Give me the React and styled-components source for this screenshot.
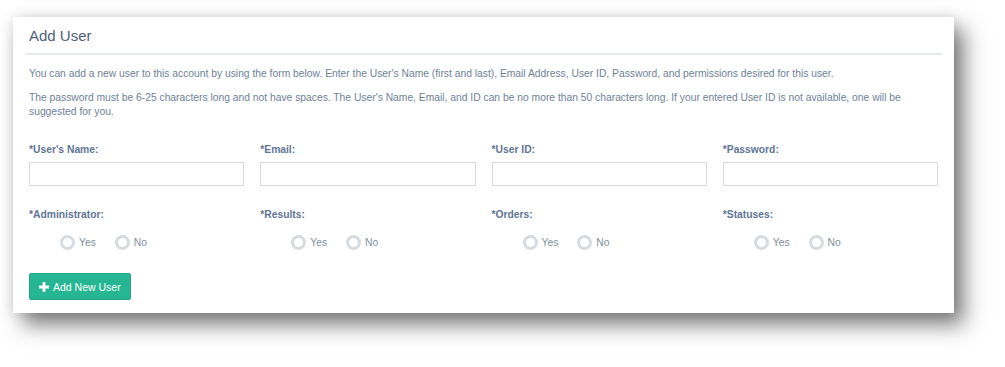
import styled, { createGlobalStyle } from "styled-components";

const GlobalStyle = createGlobalStyle`
  html, body {
    margin: 0;
    padding: 0;
    background: #ffffff;
  }
  body {
    font-family: "Liberation Sans", Arial, sans-serif;
  }
  * {
    box-sizing: border-box;
  }
`;

const textFields = [
  { id: "name", label: "*User's Name:" },
  { id: "email", label: "*Email:" },
  { id: "userid", label: "*User ID:" },
  { id: "password", label: "*Password:", type: "password" },
];

const permissions = [
  { id: "admin", label: "*Administrator:" },
  { id: "results", label: "*Results:" },
  { id: "orders", label: "*Orders:" },
  { id: "statuses", label: "*Statuses:" },
];

export default function App() {
  return (
    <>
      <GlobalStyle />
      <Page>
        <Card>
          <Header>
            <Title>Add User</Title>
          </Header>
          <Body>
            <Intro>
              You can add a new user to this account by using the form below. Enter the
              User's Name (first and last), Email Address, User ID, Password, and
              permissions desired for this user.
            </Intro>
            <Intro $gap>
              The password must be 6-25 characters long and not have spaces. The User's
              Name, Email, and ID can be no more than 50 characters long. If your entered
              User ID is not available, one will be suggested for you.
            </Intro>

            <FieldGrid>
              {textFields.map((f) => (
                <Field key={f.id}>
                  <Label htmlFor={f.id}>{f.label}</Label>
                  <Input id={f.id} type={f.type || "text"} />
                </Field>
              ))}
            </FieldGrid>

            <FieldGrid $second>
              {permissions.map((p) => (
                <Field key={p.id}>
                  <Label as="span">{p.label}</Label>
                  <RadioRow>
                    <RadioOption>
                      <Circle />
                      Yes
                    </RadioOption>
                    <RadioOption>
                      <Circle />
                      No
                    </RadioOption>
                  </RadioRow>
                </Field>
              ))}
            </FieldGrid>

            <AddButton>
              <svg width="10" height="10" viewBox="0 0 10 10">
                <path d="M3.6 0h2.8v3.6H10v2.8H6.4V10H3.6V6.4H0V3.6h3.6z" fill="#fff" />
              </svg>
              Add New User
            </AddButton>
          </Body>
        </Card>
      </Page>
    </>
  );
}

const Page = styled.div`
  width: 1005px;
  height: 367px;
  padding: 17px 0 0 13px;
`;

const Card = styled.section`
  width: 941px;
  height: 296px;
  background: #ffffff;
  box-shadow: 0 0 12px rgba(0, 0, 0, 0.12), 10px 12px 20px rgba(0, 0, 0, 0.5);
`;

const Header = styled.div`
  margin: 0 12px;
  padding: 9px 4px 7px;
  border-bottom: 2px solid #e6e9ef;
`;

const Title = styled.h2`
  margin: 0;
  font-size: 15px;
  line-height: 20px;
  font-weight: normal;
  color: #4e6079;
`;

const Body = styled.div`
  padding: 12px 16px 14px;
`;

const Intro = styled.p`
  margin: ${(p) => (p.$gap ? "10px" : "0")} 0 0;
  font-size: 10.3px;
  line-height: 14px;
  color: #6f8199;
`;

const FieldGrid = styled.div`
  display: grid;
  grid-template-columns: repeat(4, 1fr);
  column-gap: 16px;
  margin-top: ${(p) => (p.$second ? "22px" : "24px")};
`;

const Field = styled.div`
  display: flex;
  flex-direction: column;
`;

const Label = styled.label`
  font-size: 10.3px;
  line-height: 14px;
  font-weight: bold;
  color: #5f7597;
`;

const Input = styled.input`
  margin-top: 5px;
  height: 24px;
  width: 100%;
  border: 1px solid #d6d9dd;
  background: #fff;
  padding: 2px 6px;
  font-size: 11px;
  outline: none;
`;

const RadioRow = styled.div`
  display: flex;
  gap: 19px;
  margin-top: 13px;
  padding-left: 31px;
`;

const RadioOption = styled.span`
  display: flex;
  align-items: center;
  gap: 4px;
  font-size: 10.3px;
  line-height: 14px;
  color: #7f8ea3;
`;

const Circle = styled.span`
  width: 15px;
  height: 15px;
  border-radius: 50%;
  border: 3px solid #d5dbdf;
  background: #fff;
`;

const AddButton = styled.button`
  margin-top: 23px;
  display: flex;
  align-items: center;
  gap: 4px;
  height: 27px;
  padding: 0 9px;
  border: 1px solid #22a98a;
  border-radius: 2px;
  background: #27b694;
  color: #ffffff;
  font-family: "Liberation Sans", Arial, sans-serif;
  font-size: 10.5px;
  cursor: pointer;
`;
